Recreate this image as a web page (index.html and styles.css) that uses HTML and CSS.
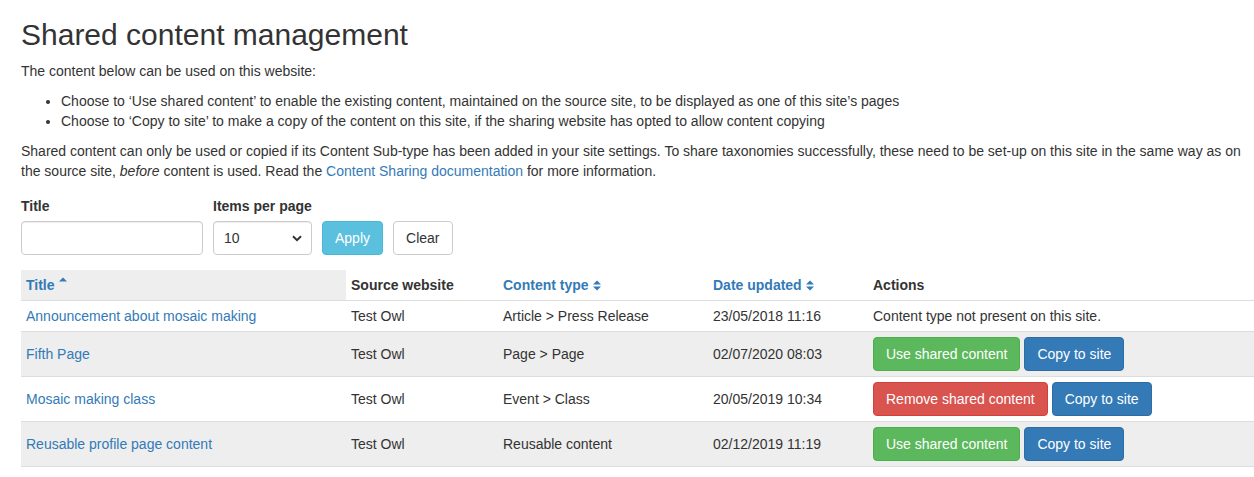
FILE: index.html
```html
<!DOCTYPE html>
<html lang="en">
<head>
<meta charset="utf-8">
<title>Shared content management</title>
<link rel="stylesheet" href="styles.css">
</head>
<body>
<main class="page">
  <h1 class="page-title">Shared content management</h1>
  <p class="intro">The content below can be used on this website:</p>
  <ul class="options">
    <li>Choose to ‘Use shared content’ to enable the existing content, maintained on the source site, to be displayed as one of this site’s pages</li>
    <li>Choose to ‘Copy to site’ to make a copy of the content on this site, if the sharing website has opted to allow content copying</li>
  </ul>
  <p class="note">Shared content can only be used or copied if its Content Sub-type has been added in your site settings. To share taxonomies successfully, these need to be set-up on this site in the same way as on the source site, <em>before</em> content is used. Read the <a href="#" class="link">Content Sharing documentation</a> for more information.</p>

  <form class="filters">
    <div class="field field-title">
      <label class="field-label" for="title">Title</label>
      <input class="form-control input-title" id="title" type="text">
    </div>
    <div class="field field-items">
      <label class="field-label" for="items">Items per page</label>
      <span class="select-wrap">
        <select class="form-control select-items" id="items">
          <option>10</option>
          <option>20</option>
          <option>50</option>
        </select>
        <svg class="select-arrow" width="10" height="7" viewBox="0 0 10 7"><path d="M1 1.2 L5 5.2 L9 1.2" fill="none" stroke="#333" stroke-width="2"/></svg>
      </span>
    </div>
    <div class="field field-buttons">
      <button type="button" class="btn btn-info">Apply</button>
      <button type="button" class="btn btn-default">Clear</button>
    </div>
  </form>

  <table class="content-table">
    <colgroup>
      <col class="c-title"><col class="c-source"><col class="c-type"><col class="c-date"><col class="c-actions">
    </colgroup>
    <thead>
      <tr>
        <th class="sorted"><a href="#" class="sort-link">Title <svg class="sort-icon" width="8" height="10" viewBox="0 0 8 10"><path d="M0 4.5 L4 0.5 L8 4.5 Z" fill="#337ab7"/></svg></a></th>
        <th>Source website</th>
        <th><a href="#" class="sort-link">Content type <svg class="sort-icon" width="8" height="11" viewBox="0 0 8 11"><path d="M0 4.5 L4 0.5 L8 4.5 Z M0 6.5 L4 10.5 L8 6.5 Z" fill="#337ab7"/></svg></a></th>
        <th><a href="#" class="sort-link">Date updated <svg class="sort-icon" width="8" height="11" viewBox="0 0 8 11"><path d="M0 4.5 L4 0.5 L8 4.5 Z M0 6.5 L4 10.5 L8 6.5 Z" fill="#337ab7"/></svg></a></th>
        <th>Actions</th>
      </tr>
    </thead>
    <tbody>
      <tr>
        <td><a href="#" class="link">Announcement about mosaic making</a></td>
        <td>Test Owl</td>
        <td>Article &gt; Press Release</td>
        <td>23/05/2018 11:16</td>
        <td>Content type not present on this site.</td>
      </tr>
      <tr class="striped">
        <td><a href="#" class="link">Fifth Page</a></td>
        <td>Test Owl</td>
        <td>Page &gt; Page</td>
        <td>02/07/2020 08:03</td>
        <td><div class="actions"><button type="button" class="btn btn-success">Use shared content</button><button type="button" class="btn btn-primary">Copy to site</button></div></td>
      </tr>
      <tr>
        <td><a href="#" class="link">Mosaic making class</a></td>
        <td>Test Owl</td>
        <td>Event &gt; Class</td>
        <td>20/05/2019 10:34</td>
        <td><div class="actions"><button type="button" class="btn btn-danger">Remove shared content</button><button type="button" class="btn btn-primary">Copy to site</button></div></td>
      </tr>
      <tr class="striped">
        <td><a href="#" class="link">Reusable profile page content</a></td>
        <td>Test Owl</td>
        <td>Reusable content</td>
        <td>02/12/2019 11:19</td>
        <td><div class="actions"><button type="button" class="btn btn-success">Use shared content</button><button type="button" class="btn btn-primary">Copy to site</button></div></td>
      </tr>
    </tbody>
  </table>
</main>
</body>
</html>
```

FILE: styles.css
```css
* { box-sizing: border-box; }

html, body {
  margin: 0;
  padding: 0;
  background: #fff;
}

body {
  font-family: "Liberation Sans", Arial, Helvetica, sans-serif;
  font-size: 14px;
  line-height: 20px;
  color: #333;
}

.page {
  padding: 18px 0 0 21px;
}

.page-title {
  font-size: 30px;
  font-weight: 400;
  line-height: 33px;
  margin: 0 0 10px 0;
  color: #333;
}

.intro {
  margin: 0 0 10px 0;
}

.options {
  margin: 0 0 10px 0;
  padding-left: 40px;
}

.note {
  margin: 0 0 15px 0;
  padding-right: 8px;
}

.link {
  color: #337ab7;
  text-decoration: none;
}

.filters {
  display: flex;
  align-items: flex-end;
  margin: 0 0 15px 0;
}

.field {
  display: flex;
  flex-direction: column;
}

.field-title { width: 182px; margin-right: 10px; }
.field-items { width: 99px; margin-right: 10px; }

.field-label {
  font-weight: 700;
  margin-bottom: 5px;
  display: block;
}

.form-control {
  height: 34px;
  border: 1px solid #ccc;
  border-radius: 4px;
  box-shadow: inset 0 1px 1px rgba(0,0,0,.075);
  font-family: inherit;
  font-size: 14px;
  color: #555;
  background: #fff;
  padding: 6px 10px;
}

.input-title { width: 182px; }

.select-wrap {
  position: relative;
  display: block;
  width: 99px;
}

.select-items {
  width: 99px;
  appearance: none;
  -webkit-appearance: none;
  color: #333;
  padding-left: 10px;
}

.select-arrow {
  position: absolute;
  right: 10px;
  top: 14px;
  pointer-events: none;
}

.field-buttons {
  flex-direction: row;
  gap: 10px;
}

.btn {
  display: inline-block;
  height: 34px;
  padding: 6px 12px;
  font-family: inherit;
  font-size: 14px;
  line-height: 20px;
  border: 1px solid transparent;
  border-radius: 4px;
  white-space: nowrap;
  cursor: pointer;
}

.btn-info { background: #5bc0de; border-color: #46b8da; color: #fff; }
.btn-default { background: #fff; border-color: #ccc; color: #333; }
.btn-success { background: #5cb85c; border-color: #4cae4c; color: #fff; }
.btn-danger { background: #d9534f; border-color: #d43f3a; color: #fff; }
.btn-primary { background: #337ab7; border-color: #2e6da4; color: #fff; }

.content-table {
  width: 100%;
  border-collapse: collapse;
  border-spacing: 0;
  table-layout: fixed;
}

.c-title { width: 325px; }
.c-source { width: 152px; }
.c-type { width: 210px; }
.c-date { width: 160px; }

.content-table th,
.content-table td {
  padding: 5px;
  text-align: left;
  vertical-align: middle;
  white-space: nowrap;
}

.content-table th {
  font-weight: 700;
  border-bottom: 1px solid #ddd;
  color: #333;
}

.content-table td {
  border-top: 1px solid #ddd;
}

.content-table tbody tr:last-child td {
  border-bottom: 1px solid #ddd;
}

.content-table th.sorted { background: #eee; }

.sort-link {
  color: #337ab7;
  text-decoration: none;
  display: inline-flex;
  align-items: center;
  gap: 4px;
}

.sorted .sort-icon { margin-top: -6px; }

.striped td { background: #eee; }

.actions {
  display: flex;
  gap: 4px;
}
```
